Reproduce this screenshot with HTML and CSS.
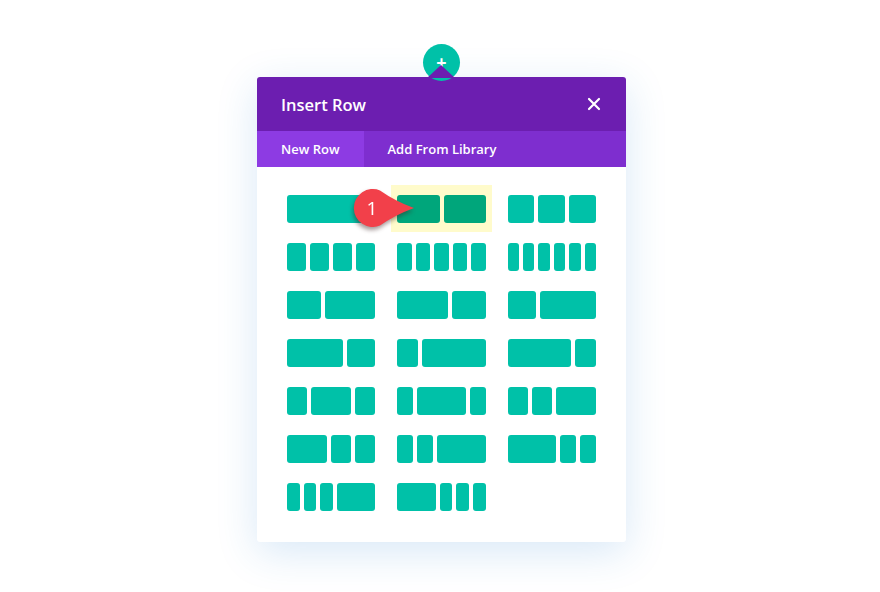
FILE: index.html
```html
<!DOCTYPE html>
<html lang="en">
  <head>
    <meta charset="UTF-8" />
    <title>Insert Row</title>
    <link rel="stylesheet" href="styles.css">
  </head>
  <body>
    <div class="stage">
      <div class="modal">
        <div class="add-btn">
          <span class="plus">+</span>
        </div>
        <div class="add-arrow"></div>

        <div class="modal-header">
          <h2>Insert Row</h2>
          <svg class="close" width="14" height="14" viewBox="0 0 14 14">
            <path d="M2 2 L12 12 M12 2 L2 12" stroke="#fff" stroke-width="2.2" stroke-linecap="round" />
          </svg>
        </div>

        <div class="tabs">
          <div class="tab active">New Row</div>
          <div class="tab">Add From Library</div>
        </div>

        <div class="layouts">
          <div class="layout"><span style="flex-grow:1"></span></div>
          <div class="layout selected">
            <span style="flex-grow:1"></span><span style="flex-grow:1"></span>
            <svg class="marker" width="68" height="48" viewBox="0 0 68 48">
              <path d="M29 5.4 Q44 16 63 23 Q44 30 29 40.6 A19 19 0 1 1 29 5.4 Z" fill="#f2404a" />
              <text x="21" y="30" text-anchor="middle" fill="#fff" font-size="19" font-family="Open Sans, sans-serif">1</text>
            </svg>
          </div>
          <div class="layout"><span style="flex-grow:1"></span><span style="flex-grow:1"></span><span style="flex-grow:1"></span></div>

          <div class="layout"><span style="flex-grow:1"></span><span style="flex-grow:1"></span><span style="flex-grow:1"></span><span style="flex-grow:1"></span></div>
          <div class="layout"><span style="flex-grow:1"></span><span style="flex-grow:1"></span><span style="flex-grow:1"></span><span style="flex-grow:1"></span><span style="flex-grow:1"></span></div>
          <div class="layout"><span style="flex-grow:1"></span><span style="flex-grow:1"></span><span style="flex-grow:1"></span><span style="flex-grow:1"></span><span style="flex-grow:1"></span><span style="flex-grow:1"></span></div>

          <div class="layout"><span style="flex-grow:2"></span><span style="flex-grow:3"></span></div>
          <div class="layout"><span style="flex-grow:3"></span><span style="flex-grow:2"></span></div>
          <div class="layout"><span style="flex-grow:1"></span><span style="flex-grow:2"></span></div>

          <div class="layout"><span style="flex-grow:2"></span><span style="flex-grow:1"></span></div>
          <div class="layout"><span style="flex-grow:1"></span><span style="flex-grow:3"></span></div>
          <div class="layout"><span style="flex-grow:3"></span><span style="flex-grow:1"></span></div>

          <div class="layout"><span style="flex-grow:1"></span><span style="flex-grow:2"></span><span style="flex-grow:1"></span></div>
          <div class="layout"><span style="flex-grow:1"></span><span style="flex-grow:3"></span><span style="flex-grow:1"></span></div>
          <div class="layout"><span style="flex-grow:1"></span><span style="flex-grow:1"></span><span style="flex-grow:2"></span></div>

          <div class="layout"><span style="flex-grow:2"></span><span style="flex-grow:1"></span><span style="flex-grow:1"></span></div>
          <div class="layout"><span style="flex-grow:1"></span><span style="flex-grow:1"></span><span style="flex-grow:3"></span></div>
          <div class="layout"><span style="flex-grow:3"></span><span style="flex-grow:1"></span><span style="flex-grow:1"></span></div>

          <div class="layout"><span style="flex-grow:1"></span><span style="flex-grow:1"></span><span style="flex-grow:1"></span><span style="flex-grow:3"></span></div>
          <div class="layout"><span style="flex-grow:3"></span><span style="flex-grow:1"></span><span style="flex-grow:1"></span><span style="flex-grow:1"></span></div>
        </div>
      </div>
    </div>
  </body>
</html>
```

FILE: styles.css
```css
body {
  margin: 0;
  background-color: #fff;
  font-family: "Open Sans", sans-serif;
}

.stage {
  padding: 77px 0 50px 257px;
}

.modal {
  position: relative;
  width: 369px;
  background-color: #fff;
  border-radius: 3px;
  box-shadow: 0 10px 40px rgba(40, 130, 210, 0.18);
}

.add-btn {
  position: absolute;
  left: 166px;
  top: -33px;
  width: 37px;
  height: 37px;
  border-radius: 50%;
  background-color: #00c1a8;
  color: #fff;
  text-align: center;
}

.add-btn .plus {
  display: block;
  font-size: 18px;
  font-weight: 700;
  line-height: 37px;
}

.add-arrow {
  position: absolute;
  left: 170px;
  top: -12px;
  width: 0;
  height: 0;
  border-left: 14px solid transparent;
  border-right: 14px solid transparent;
  border-bottom: 13px solid #6c1eb0;
}

.modal-header {
  display: flex;
  align-items: center;
  justify-content: space-between;
  height: 54px;
  padding: 0 25px 0 24px;
  background-color: #6c1eb0;
  border-radius: 3px 3px 0 0;
}

.modal-header h2 {
  margin: 0;
  color: #fff;
  font-size: 16.5px;
  font-weight: 600;
}

.tabs {
  display: flex;
  height: 36px;
  background-color: #7e2ecf;
}

.tab {
  display: flex;
  align-items: center;
  padding: 0 24px;
  color: #fff;
  font-size: 13px;
  font-weight: 600;
}

.tab.active {
  background-color: #8d3be3;
}

.layouts {
  display: grid;
  grid-template-columns: repeat(3, 1fr);
  column-gap: 22px;
  row-gap: 20px;
  padding: 28px 30px 31px;
}

.layout {
  position: relative;
  display: flex;
  gap: 4px;
  height: 28px;
}

.layout span {
  flex-basis: 0;
  background-color: #00c1a8;
  border-radius: 3px;
}

.layout.selected {
  z-index: 0;
}

.layout.selected::before {
  content: "";
  position: absolute;
  top: -10px;
  bottom: -9px;
  left: -6px;
  right: -6px;
  background-color: #fffbcb;
  z-index: -1;
}

.layout.selected span {
  background-color: #00a67b;
}

.marker {
  position: absolute;
  left: -46px;
  top: -10px;
  filter: drop-shadow(-1px 3px 2px rgba(60, 30, 30, 0.45));
}
```
